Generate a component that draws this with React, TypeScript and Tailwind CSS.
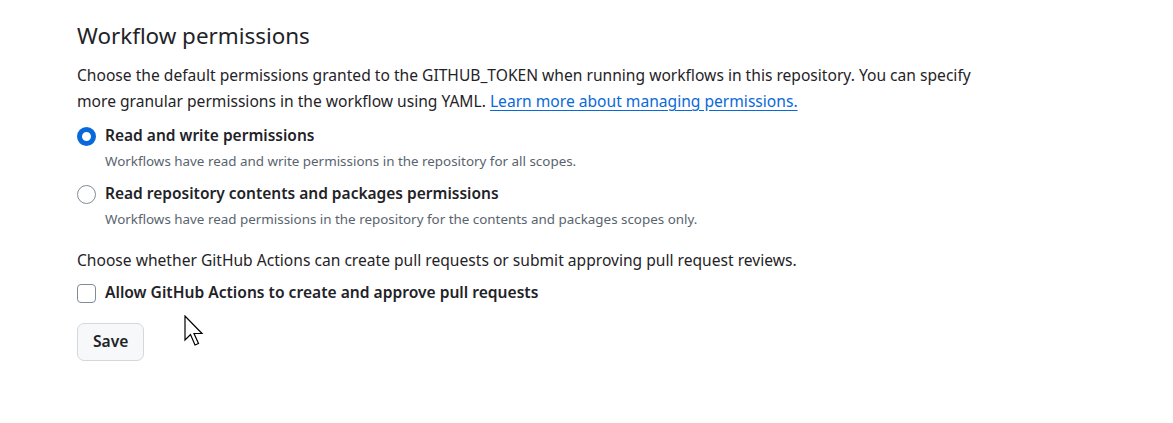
import React from "react";

const font = { fontFamily: '"Noto Sans", "Open Sans", sans-serif' };

const Radio: React.FC<{ checked?: boolean }> = ({ checked }) => (
    <span
        className={`inline-block w-[19px] h-[19px] rounded-full bg-white shrink-0 ${checked ? "border-[5px] border-[#0969da]" : "border border-[#818b98]"}`}
    />
);

const Cursor = () => (
    <svg className="absolute left-[184px] top-[315px]" width="22" height="33" viewBox="0 0 22 33">
        <path d="M1 1 L1 25 L6.5 19.5 L11 30 L14.5 28.5 L10 18.5 L18 18.5 Z" fill="#fff" stroke="#000" strokeWidth="1.2" strokeLinejoin="miter" />
    </svg>
);

export default function App() {
    return (
        <div className="relative w-[1173px] h-[423px] bg-white text-[#1f2328]" style={font}>
            <div className="pl-[77px] pt-[20px]">
                <h2 className="text-[22.4px] leading-[32px] font-normal">Workflow permissions</h2>
                <p className="mt-[10px] text-[15.6px] leading-[26px] w-[920px]">
                    Choose the default permissions granted to the GITHUB_TOKEN when running workflows in this repository. You can specify more granular permissions in the workflow using YAML.{" "}
                    <a className="text-[#0969da] underline underline-offset-[3px]">Learn more about managing permissions.</a>
                </p>

                <div className="mt-[10px] flex flex-col">
                    <div className="flex items-center gap-[9px] h-[24px]">
                        <Radio checked />
                        <span className="text-[15.5px] font-semibold">Read and write permissions</span>
                    </div>
                    <div className="pl-[28px] mt-[3px] text-[13.4px] leading-[20px] text-[#59636e]">
                        Workflows have read and write permissions in the repository for all scopes.
                    </div>
                    <div className="flex items-center gap-[9px] h-[24px] mt-[11px]">
                        <Radio />
                        <span className="text-[15.5px] font-semibold">Read repository contents and packages permissions</span>
                    </div>
                    <div className="pl-[28px] mt-[3px] text-[13.4px] leading-[20px] text-[#59636e]">
                        Workflows have read permissions in the repository for the contents and packages scopes only.
                    </div>
                </div>

                <p className="mt-[19px] text-[15.6px] leading-[24px]">
                    Choose whether GitHub Actions can create pull requests or submit approving pull request reviews.
                </p>
                <div className="flex items-center gap-[9px] h-[24px] mt-[9px]">
                    <span className="inline-block w-[19px] h-[19px] rounded-[4px] border border-[#818b98] bg-white shrink-0" />
                    <span className="text-[15.6px] font-semibold">Allow GitHub Actions to create and approve pull requests</span>
                </div>

                <button className="mt-[18px] h-[38px] px-[15px] rounded-[7px] border border-[#d1d9e0] bg-[#f6f8fa] text-[15.6px] font-semibold">
                    Save
                </button>
            </div>
            <Cursor />
        </div>
    );
}
